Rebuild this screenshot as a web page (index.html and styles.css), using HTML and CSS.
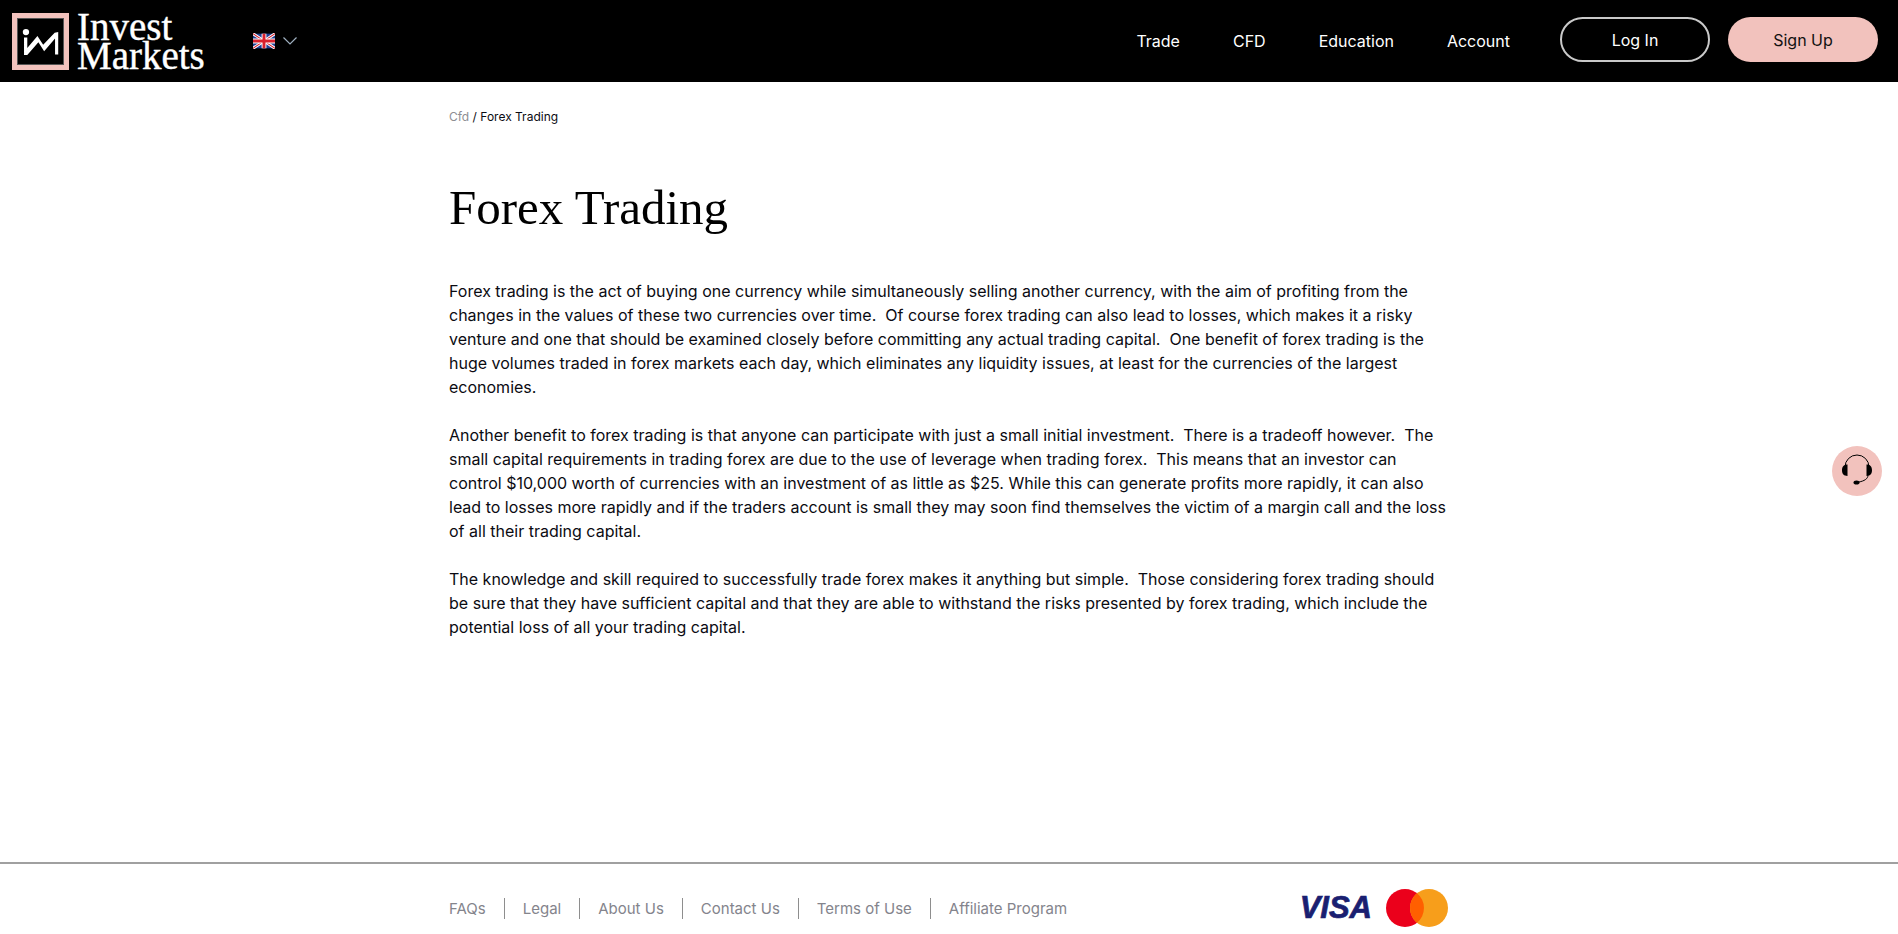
FILE: index.html
```html
<!DOCTYPE html>
<html lang="en">
<head>
    <meta charset="UTF-8">
    <meta name="viewport" content="width=device-width, initial-scale=1.0">
    <title>Forex Trading</title>
    <link rel="stylesheet" href="styles.css">
</head>
<body>
    <header class="header">
        <a class="logo" href="#">
            <span class="logo-box">
                <svg class="logo-mark" viewBox="0 0 47 47" width="47" height="47">
                    <circle cx="8.300" cy="13.700" r="3.300" fill="#fff"/>
                    <path d="M6.300 19.300h3.400v11l10.600-12.600 6 9.300 12-12.700 3.700-.6v23.300h-3.300v-16.700l-11.400 13.400-6-9.400-11.600 13.400h-3.400z" fill="#fff"/>
                </svg>
            </span>
            <span class="logo-text">Invest<br>Markets</span>
        </a>
        <button class="lang">
            <svg class="flag" viewBox="0 0 60 40" width="22" height="16">
                <rect width="60" height="40" fill="#1f3f94"/>
                <path d="M0 0l60 40M60 0L0 40" stroke="#fff" stroke-width="8"/>
                <path d="M0 0l60 40M60 0L0 40" stroke="#d8202c" stroke-width="3"/>
                <path d="M30 0v40M0 20h60" stroke="#fff" stroke-width="13"/>
                <path d="M30 0v40M0 20h60" stroke="#d8202c" stroke-width="8"/>
            </svg>
            <svg class="chevron" viewBox="0 0 14 8" width="14" height="8">
                <path d="M.5.5L7 7 13.500.5" fill="none" stroke="#9fb0c0" stroke-width="1.200"/>
            </svg>
        </button>
        <nav class="nav">
            <a href="#">Trade</a>
            <a href="#">CFD</a>
            <a href="#">Education</a>
            <a href="#">Account</a>
        </nav>
        <div class="auth">
            <a class="btn btn-login" href="#">Log In</a>
            <a class="btn btn-signup" href="#">Sign Up</a>
        </div>
    </header>

    <main class="main">
        <p class="crumbs"><a href="#">Cfd</a> / <span>Forex Trading</span></p>
        <h1 class="title">Forex Trading</h1>
        <p class="text">Forex trading is the act of buying one currency while simultaneously selling another currency, with the aim of profiting from the changes in the values of these two currencies over time.&nbsp; Of course forex trading can also lead to losses, which makes it a risky venture and one that should be examined closely before committing any actual trading capital.&nbsp; One benefit of forex trading is the huge volumes traded in forex markets each day, which eliminates any liquidity issues, at least for the currencies of the largest economies.</p>
        <p class="text">Another benefit to forex trading is that anyone can participate with just a small initial investment.&nbsp; There is a tradeoff however.&nbsp; The small capital requirements in trading forex are due to the use of leverage when trading forex.&nbsp; This means that an investor can control $10,000 worth of currencies with an investment of as little as $25. While this can generate profits more rapidly, it can also lead to losses more rapidly and if the traders account is small they may soon find themselves the victim of a margin call and the loss of all their trading capital.</p>
        <p class="text">The knowledge and skill required to successfully trade forex makes it anything but simple.&nbsp; Those considering forex trading should be sure that they have sufficient capital and that they are able to withstand the risks presented by forex trading, which include the potential loss of all your trading capital.</p>
    </main>

    <a class="support" href="#">
        <svg viewBox="0 0 34 34" width="34" height="34">
            <path d="M5 15v-2a12 12 0 0 1 24 0v2" fill="none" stroke="#000" stroke-width="1"/>
            <path d="M7.500 10.500v11.500c-3.500 0-5.500-2-5.500-5.700s2-5.800 5.500-5.800zM26.500 10.500c3.500 0 5.500 2 5.500 5.800s-2 5.700-5.500 5.700z" fill="#000"/>
            <path d="M28 21c0 4-4 6-9 7" fill="none" stroke="#000" stroke-width="1"/>
            <ellipse cx="16.500" cy="28.500" rx="3" ry="2" fill="#000"/>
        </svg>
    </a>

    <footer class="footer">
        <div class="footer-in">
            <ul class="links">
                <li><a href="#">FAQs</a></li>
                <li><a href="#">Legal</a></li>
                <li><a href="#">About Us</a></li>
                <li><a href="#">Contact Us</a></li>
                <li><a href="#">Terms of Use</a></li>
                <li><a href="#">Affiliate Program</a></li>
            </ul>
            <div class="pay">
                <span class="visa">VISA</span>
                <svg viewBox="0 0 62 38" width="62" height="38">
                    <circle cx="19" cy="19" r="19" fill="#eb001b"/>
                    <circle cx="43" cy="19" r="19" fill="#f79e1b"/>
                    <path d="M31 4.300a19 19 0 0 1 0 29.400a19 19 0 0 1 0-29.400z" fill="#ff5f00"/>
                </svg>
            </div>
        </div>
    </footer>
</body>
</html>
```

FILE: styles.css
```css
html{
    box-sizing: border-box;
    height: 100%;
}
*,
*::before,
*::after{
    box-sizing: inherit;
    margin: 0;
    padding: 0;
}
body{
    height: inherit;
    display: flex;
    flex-direction: column;
    background: #fff;
    color: #0b0b12;
    font-family: Inter, Arial, Helvetica, sans-serif;
    overflow: hidden;
}
a{
    color: inherit;
    text-decoration: none;
}

/* header */
.header{
    height: 82px;
    flex: none;
    display: flex;
    align-items: center;
    background: #000;
    color: #fff;
    padding: 0 20px 0 12px;
}
.logo{
    display: flex;
    align-items: center;
    gap: 8px;
}
.logo-box{
    width: 57px;
    height: 57px;
    border: 5px solid #f2c2bd;
    display: flex;
    background: #000;
}
.logo-mark{
    border: 1px solid #555;
}
.logo-text{
    font-family: "Liberation Serif", "Times New Roman", serif;
    font-size: 39px;
    line-height: 29px;
    -webkit-text-stroke: .4px #fff;
}
.lang{
    display: flex;
    align-items: center;
    gap: 8px;
    margin-left: 48px;
    background: none;
    border: 0;
}
.nav{
    display: flex;
    gap: 53px;
    margin-left: auto;
    margin-bottom: 1px;
    font-size: 16px;
    font-weight: 400;
}
.auth{
    display: flex;
    gap: 18px;
    margin-left: 50px;
    margin-bottom: 3px;
}
.btn{
    width: 150px;
    height: 45px;
    border-radius: 23px;
    display: flex;
    align-items: center;
    justify-content: center;
    font-size: 16px;
}
.btn-login{
    border: 2px solid #c9c9c9;
}
.btn-signup{
    background: #f2c2bd;
    color: #111;
}

/* content */
.main{
    flex: 1;
    width: 1000px;
    margin-left: 449px;
    padding-top: 28px;
}
.crumbs{
    font-size: 12px;
    line-height: 14px;
    color: #0b0b12;
}
.crumbs a{
    color: #8e8e93;
}
.title{
    font-family: "Liberation Serif", "Times New Roman", serif;
    font-size: 49px;
    line-height: 60px;
    font-weight: 400;
    color: #000;
    margin-top: 54px;
    margin-bottom: 41px;
}
.text{
    font-size: 16px;
    line-height: 24px;
    margin-bottom: 24px;
}

/* floating support button */
.support{
    position: fixed;
    left: 1832px;
    top: 446px;
    width: 50px;
    height: 50px;
    border-radius: 50%;
    background: #f2c2bd;
    display: flex;
    align-items: center;
    justify-content: center;
}

/* footer */
.footer{
    height: 72px;
    flex: none;
    border-top: 2px solid #a0a0a0;
}
.footer-in{
    width: 999px;
    margin-left: 449px;
    height: 100%;
    display: flex;
    align-items: center;
    justify-content: space-between;
    padding-top: 24px;
    padding-bottom: 6px;
}
.links{
    list-style: none;
    display: flex;
    color: #84848c;
    font-size: 15px;
}
.links li{
    height: 21px;
    line-height: 21px;
    padding: 0 18px;
    border-right: 1px solid #8e8e8e;
}
.links li:first-child{
    padding-left: 0;
}
.links li:last-child{
    border-right: 0;
}
.pay{
    display: flex;
    align-items: center;
    gap: 14px;
}
.visa{
    font-family: "Liberation Sans", Arial, sans-serif;
    font-style: italic;
    font-weight: 700;
    font-size: 31px;
    color: #1a1f71;
    -webkit-text-stroke: .7px #1a1f71;
}
```
